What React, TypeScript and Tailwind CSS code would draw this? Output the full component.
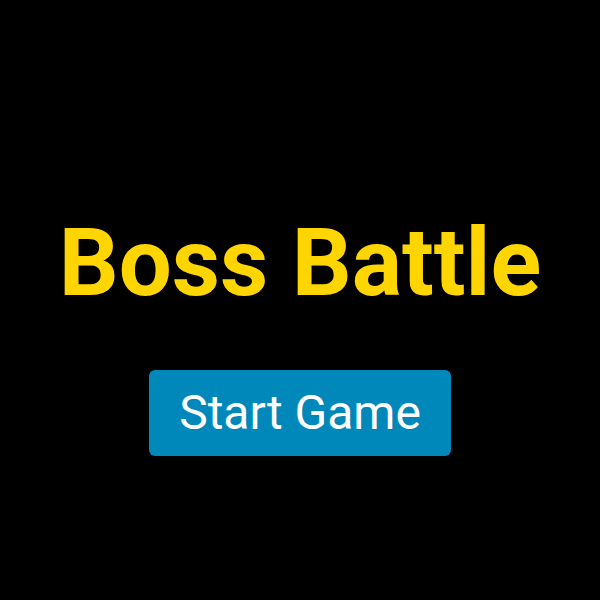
export default function App() {
    return (
        <div className="w-[600px] h-[600px] bg-black flex flex-col items-center pt-[207px] font-['Roboto',sans-serif]">
            <h1 className="text-[94px] leading-[113px] font-bold text-[#ffd500]">Boss Battle</h1>
            <button className="mt-[50px] w-[302px] h-[86px] rounded-md bg-[#0088bb] text-white text-[48px] leading-none">
                Start Game
            </button>
        </div>
    );
}
